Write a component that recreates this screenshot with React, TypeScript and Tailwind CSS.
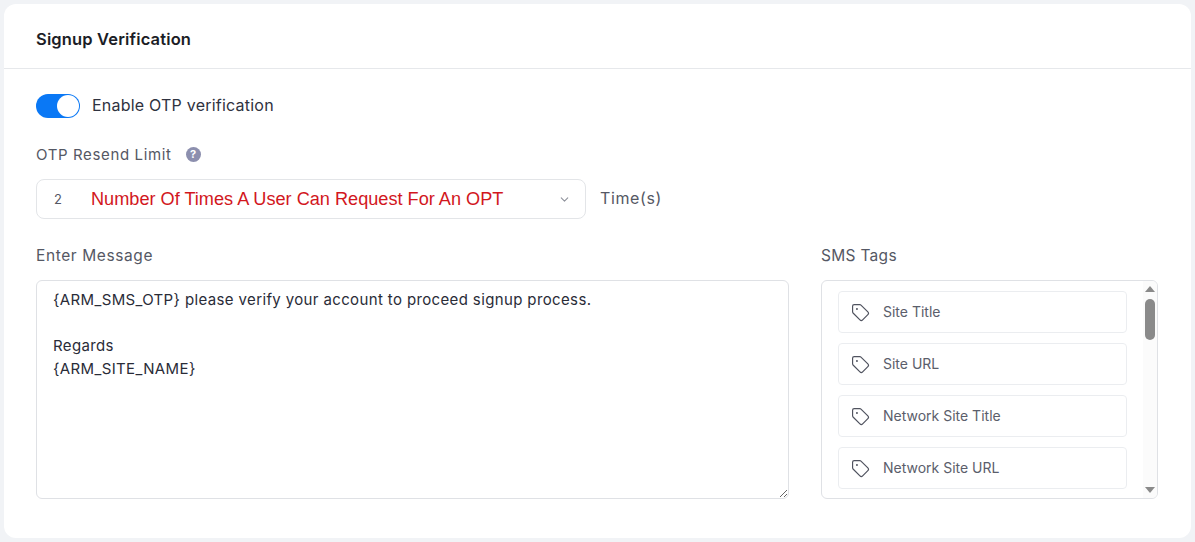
import React from "react";
import { ChevronDown, Tag } from "lucide-react";

const tags = ["Site Title", "Site URL", "Network Site Title", "Network Site URL"];

const TagRow: React.FC<{ label: string }> = ({ label }) => (
  <div className="h-[42px] flex items-center border border-[#ebedf0] rounded-[4px] pl-[12px] flex-shrink-0">
    <Tag size={19} strokeWidth={1.5} className="text-[#50535f]" />
    <span className="ml-[13px] -mt-[2px] text-[14px] text-[#5b5e6b]">{label}</span>
  </div>
);

export default function App() {
  return (
    <div className="h-[542px] w-[1195px] bg-[#f1f3f6] p-[4px] font-['Inter','Noto_Sans',sans-serif] overflow-hidden">
      <div className="h-[534px] bg-white rounded-[12px]">
        <div className="h-[65px] border-b border-[#e6e8eb] px-[32px] pt-[7px] flex items-center">
          <h2 className="text-[16.5px] font-semibold text-[#1b1d26] tracking-[0.15px]">Signup Verification</h2>
        </div>

        <div className="px-[32px] pt-[25px]">
          <div className="flex items-center h-[24px]">
            <div className="w-[44px] h-[24px] rounded-full bg-[#0a78f5] p-[1px] flex justify-end">
              <div className="w-[22px] h-[22px] rounded-full bg-white" />
            </div>
            <span className="ml-[12px] -mt-[2px] text-[16px] text-[#2f3240] tracking-[0.22px]">Enable OTP verification</span>
          </div>

          <div className="flex items-center h-[24px] mt-[24px]">
            <span className="text-[15px] mt-[3px] text-[#555864] tracking-[0.63px]">OTP Resend Limit</span>
            <span className="ml-[14px] w-[15px] h-[15px] rounded-full bg-[#8c8fae] text-white text-[11px] font-bold flex items-center justify-center">?</span>
          </div>

          <div className="flex items-center mt-[13px]">
            <div className="w-[550px] h-[40px] border border-[#e3e5e8] rounded-[8px] flex items-center pl-[17px] pr-[14px]">
              <span className="text-[13px] text-[#555864] w-[37px] mt-[2px]">2</span>
              <span className="flex-1 font-['Liberation_Sans',sans-serif] text-[18.15px] text-[#d2171d] mt-[2px]">Number Of Times A User Can Request For An OPT</span>
              <ChevronDown size={13} className="text-[#8f929c]" />
            </div>
            <span className="ml-[14px] text-[16px] text-[#555864] tracking-[0.6px] -translate-y-[1px]">Time(s)</span>
          </div>

          <div className="flex mt-[24px]">
            <div className="w-[753px]">
              <div className="h-[24px] flex items-center pt-[2px] text-[15.5px] text-[#555864] tracking-[0.6px]">Enter Message</div>
              <textarea
                className="block mt-[13px] w-full h-[219px] border border-[#dfe1e5] rounded-[6px] pl-[16px] pr-[16px] pt-[7px] text-[15px] leading-[23px] tracking-[0.37px] text-[#2a2c38] outline-none"
                defaultValue={"{ARM_SMS_OTP} please verify your account to proceed signup process.\n\nRegards\n{ARM_SITE_NAME}"}
              />
            </div>
            <div className="ml-[32px] w-[337px]">
              <div className="h-[24px] flex items-center pt-[2px] text-[15.5px] text-[#555864] tracking-[0.3px]">SMS Tags</div>
              <div className="mt-[13px] h-[219px] border border-[#dfe1e5] rounded-[6px] flex overflow-hidden">
                <div className="w-[289px] ml-[16px] pt-[10px] flex flex-col gap-[10px]">
                  {tags.map((t) => (
                    <TagRow key={t} label={t} />
                  ))}
                </div>
                <div className="ml-[16px] w-[14px] flex flex-col items-center pt-[5px] pb-[5px] bg-[#fbfbfb]">
                  <div className="w-0 h-0 border-x-[5px] border-x-transparent border-b-[6px] border-b-[#8a8a8a]" />
                  <div className="mt-[7px] w-[10px] h-[41px] rounded-full bg-[#8a8a8a]" />
                  <div className="mt-auto w-0 h-0 border-x-[5px] border-x-transparent border-t-[6px] border-t-[#8a8a8a]" />
                </div>
              </div>
            </div>
          </div>
        </div>
      </div>
    </div>
  );
}
